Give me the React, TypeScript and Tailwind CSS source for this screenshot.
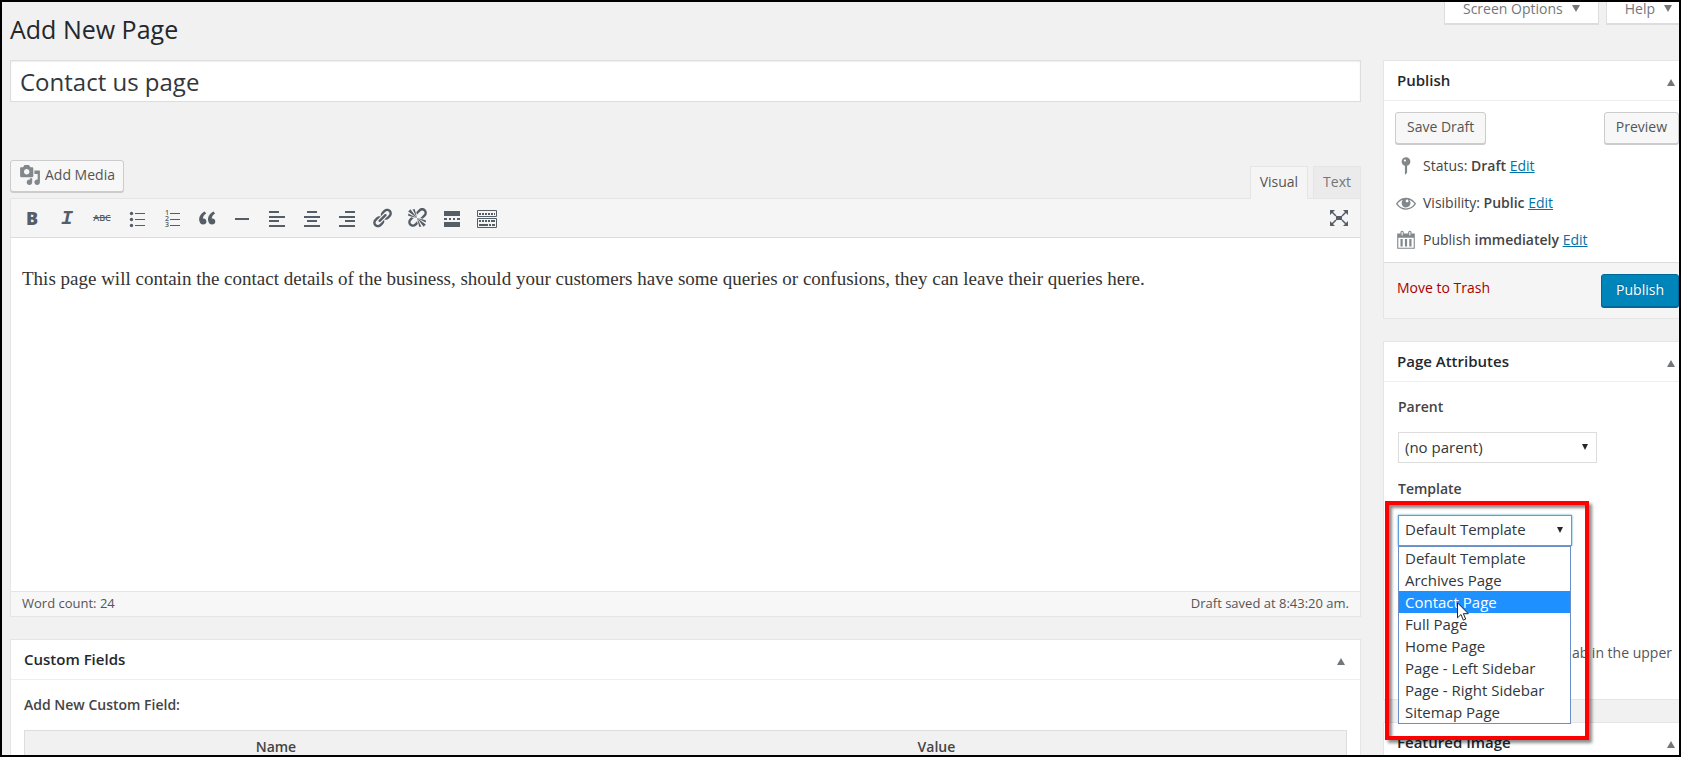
import type { ReactNode } from "react";

const templates = [
  "Default Template",
  "Archives Page",
  "Contact Page",
  "Full Page",
  "Home Page",
  "Page - Left Sidebar",
  "Page - Right Sidebar",
  "Sitemap Page",
];

const iconPaths = {
  quote:
    "M9.49 13.22c0-.74-.2-1.38-.61-1.9-.62-.78-1.83-.88-2.53-.72-.29-1.65 1.11-3.75 2.92-4.65L7.88 4c-2.73 1.3-5.42 4.28-4.96 8.05C3.21 14.43 4.59 16 6.54 16c.85 0 1.56-.25 2.12-.75s.83-1.18.83-2.03zm8.05 0c0-.74-.2-1.38-.61-1.9-.63-.78-1.83-.88-2.53-.72-.29-1.65 1.11-3.75 2.92-4.65L15.93 4c-2.73 1.3-5.41 4.28-4.95 8.05.29 2.38 1.66 3.95 3.61 3.95.85 0 1.56-.25 2.12-.75s.83-1.18.83-2.03z",
  link: "M17.74 2.76c1.68 1.69 1.68 4.41 0 6.1l-1.53 1.52c-1.12 1.12-2.7 1.47-4.14 1.09l2.62-2.61.76-.77.76-.76c.84-.84.84-2.2 0-3.04-.84-.85-2.2-.85-3.04 0l-.77.76-3.38 3.38c-.37-1.44-.02-3.02 1.1-4.14l1.52-1.53c1.69-1.68 4.42-1.68 6.1 0zM8.59 13.43l5.34-5.34c.42-.42.42-1.1 0-1.52-.44-.43-1.13-.39-1.53 0l-5.33 5.34c-.42.42-.42 1.1 0 1.52.44.43 1.13.39 1.52 0zm-.76 2.29l4.14-4.15c.38 1.44.03 3.02-1.09 4.14l-1.52 1.53c-1.69 1.68-4.41 1.68-6.1 0-1.68-1.68-1.68-4.42 0-6.1l1.53-1.52c1.12-1.12 2.7-1.47 4.14-1.1l-4.14 4.15c-.85.84-.85 2.2 0 3.05.84.84 2.2.84 3.04 0z",
  unlink:
    "M17.74 2.26c1.68 1.69 1.68 4.41 0 6.1l-1.53 1.52c-.32.33-.69.58-1.08.77L13 10l1.69-1.64.76-.77.76-.76c.84-.84.84-2.2 0-3.04-.84-.85-2.2-.85-3.04 0l-.77.76-.76.76L10 7l-.65-2.14c.19-.38.44-.75.77-1.07l1.52-1.53c1.69-1.68 4.42-1.68 6.1 0zM2 4l8 6-6-8zM6 2l4 8-2-8zM2 6l8 4-8-2zM9.36 13.69L10 13l.74 2.35-1.38 1.39c-1.69 1.68-4.41 1.68-6.1 0-1.68-1.68-1.68-4.42 0-6.1l1.39-1.38L7 10l-.69.64-1.52 1.53c-.85.84-.85 2.2 0 3.04.84.85 2.2.85 3.04 0zM18 16l-8-6 6 8zM14 18l-4-8 2 8zM18 14l-8-4 8 2z",
  media:
    "M13 11V4c0-.55-.45-1-1-1h-1.67L9 1H5L3.67 3H2c-.55 0-1 .45-1 1v7c0 .55.45 1 1 1h10c.55 0 1-.45 1-1zM7 4.5c1.38 0 2.5 1.12 2.5 2.5S8.38 9.5 7 9.5 4.5 8.38 4.5 7 5.62 4.5 7 4.5zM14 6h5v10.5c0 1.38-1.12 2.5-2.5 2.5S14 17.88 14 16.5s1.12-2.5 2.5-2.5c.17 0 .34.02.5.05V9h-3V6zm-4 8.05V13h2v3.5c0 1.38-1.12 2.5-2.5 2.5S7 17.88 7 16.5 8.12 14 9.5 14c.17 0 .34.02.5.05z",
  status:
    "M14 6c0 1.86-1.28 3.41-3 3.86V16c0 1-2 2-2 2V9.86c-1.72-.45-3-2-3-3.86 0-2.21 1.79-4 4-4s4 1.79 4 4zM8 5c0 .55.45 1 1 1s1-.45 1-1-.45-1-1-1-1 .45-1 1z",
  visibility:
    "M18.3 9.5C15 4.9 8.5 3.8 3.9 7.2c-1.2.9-2.2 2.1-3 3.4.2.4.5.8.8 1.2 3.3 4.6 9.6 5.6 14.2 2.4.9-.7 1.7-1.4 2.4-2.4.3-.4.5-.8.8-1.2-.3-.4-.5-.8-.8-1.1zm-8.2-2.3c.5-.5 1.3-.5 1.8 0s.5 1.3 0 1.8-1.3.5-1.8 0-.5-1.3 0-1.8zm-.1 7.7c-3.1 0-6-1.6-7.7-4.2C3.5 9 5.1 7.8 7 7.2c-.7.8-1 1.7-1 2.7 0 2.2 1.7 4.1 4 4.1 2.2 0 4.1-1.7 4.1-4v-.1c0-1-.4-2-1.1-2.7 1.9.6 3.5 1.8 4.7 3.5-1.7 2.6-4.6 4.2-7.7 4.2z",
  calendar:
    "M15 4h3v14H2V4h3V3c0-.83.67-1.5 1.5-1.5S8 2.17 8 3v1h4V3c0-.83.67-1.5 1.5-1.5S15 2.17 15 3v1zM6 3v2.5c0 .28.22.5.5.5s.5-.22.5-.5V3c0-.28-.22-.5-.5-.5S6 2.72 6 3zm7 0v2.5c0 .28.22.5.5.5s.5-.22.5-.5V3c0-.28-.22-.5-.5-.5s-.5.22-.5.5zm4 14V8H3v9h14zM7 16V9H5v7h2zm4 0V9H9v7h2zm4 0V9h-2v7h2z",
};

function Dashicon({ name }: { name: keyof typeof iconPaths }) {
  return (
    <svg viewBox="0 0 20 20" className="size-[22px] shrink-0 fill-current">
      <path d={iconPaths[name]} />
    </svg>
  );
}

// Line art on the 22px toolbar grid
function Glyph({ children }: { children: ReactNode }) {
  return (
    <svg viewBox="0 0 22 22" className="size-[22px] shrink-0 fill-current">
      {children}
    </svg>
  );
}

function AlignIcon({ shortX }: { shortX: number }) {
  return (
    <Glyph>
      <rect x={shortX} y="4" width="10" height="2" />
      <rect x="3" y="9" width="16" height="2" />
      <rect x={shortX} y="13" width="10" height="2" />
      <rect x="3" y="18" width="16" height="2" />
    </Glyph>
  );
}

function Caret({ up }: { up?: boolean }) {
  return (
    <svg
      viewBox="0 0 8 7"
      className={up ? "h-[7px] w-2 fill-[#72777c]" : "h-[7px] w-2 rotate-180 fill-[#72777c]"}
    >
      <path d="M4 0l4 7H0z" />
    </svg>
  );
}

const toolbar: { label: string; icon: ReactNode }[] = [
  {
    label: "Bold",
    icon: <span className="text-lg leading-[22px] font-extrabold">B</span>,
  },
  {
    label: "Italic",
    icon: (
      <span className="font-['Liberation_Mono'] text-xl leading-6 font-bold italic">
        I
      </span>
    ),
  },
  {
    label: "Strikethrough",
    icon: (
      <span className="text-[9px] leading-[22px] font-semibold line-through">ABC</span>
    ),
  },
  {
    label: "Bulleted list",
    icon: (
      <Glyph>
        <circle cx="5.5" cy="6.5" r="1.7" />
        <circle cx="5.5" cy="12.5" r="1.7" />
        <circle cx="5.5" cy="18.5" r="1.7" />
        <rect x="9" y="6" width="10" height="1" />
        <rect x="9" y="12" width="10" height="1" />
        <rect x="9" y="18" width="10" height="1" />
      </Glyph>
    ),
  },
  {
    label: "Numbered list",
    icon: (
      <Glyph>
        <g fontSize="7" fontWeight="600">
          <text x="4" y="8">1</text>
          <text x="4" y="14">2</text>
          <text x="4" y="20">3</text>
        </g>
        <rect x="9" y="6" width="10" height="1" />
        <rect x="9" y="12" width="10" height="1" />
        <rect x="9" y="18" width="10" height="1" />
      </Glyph>
    ),
  },
  { label: "Blockquote", icon: <Dashicon name="quote" /> },
  {
    label: "Horizontal line",
    icon: (
      <Glyph>
        <rect x="4" y="11" width="14" height="2" />
      </Glyph>
    ),
  },
  { label: "Align left", icon: <AlignIcon shortX={3} /> },
  { label: "Align center", icon: <AlignIcon shortX={6} /> },
  { label: "Align right", icon: <AlignIcon shortX={9} /> },
  { label: "Insert link", icon: <Dashicon name="link" /> },
  { label: "Remove link", icon: <Dashicon name="unlink" /> },
  {
    label: "Read more tag",
    icon: (
      <Glyph>
        <path d="M3 4h16v5H3zM3 15h16v5H3zM3 11h3v2H3zM8 11h2v2H8zM12 11h2v2h-2zM16 11h3v2h-3z" />
      </Glyph>
    ),
  },
  {
    label: "Toolbar toggle",
    icon: (
      <Glyph>
        <path
          d="M1.5 3.5h19v6h-19zM1.5 11.5h19v9h-19z"
          fill="none"
          stroke="currentColor"
        />
        <path d="M3 6h2v2H3zM6 6h2v2H6zM9 6h2v2H9zM12 6h2v2h-2zM15 6h2v2h-2zM18 6h1v2h-1zM3 13h2v2H3zM6 13h2v2H6zM9 13h2v2H9zM12 13h2v2h-2zM15 13h4v2h-4zM3 17h9v2H3zM13 17h2v2h-2zM16 17h3v2h-3z" />
      </Glyph>
    ),
  },
];

function BoxHeader({ title, wide }: { title: string; wide?: boolean }) {
  return (
    <div
      className={`flex h-10 items-center justify-between border-b border-[#eee] pl-[13px] ${
        wide ? "pr-[15px]" : "pr-1"
      }`}
    >
      <h2 className="pb-[2px] text-[15px] leading-5 font-semibold text-[#23282d]">
        {title}
      </h2>
      <button type="button" aria-label={`Toggle ${title}`} className="pt-[3px]">
        <Caret up />
      </button>
    </div>
  );
}

const boxClass = "border border-r-0 border-[#e5e5e5] bg-white";
const buttonClass =
  "h-8 rounded-[3px] border border-[#ccc] bg-[#f7f7f7] pb-[2px] text-sm text-[#555] shadow-[0_1px_0_#ccc]";

function PublishRow({
  icon,
  label,
  value,
}: {
  icon: keyof typeof iconPaths;
  label: string;
  value: string;
}) {
  return (
    <div className="flex h-[37px] items-center gap-[6px] text-[#82878c]">
      <Dashicon name={icon} />
      <span className="text-sm text-[#444]">
        {label} <b className="font-semibold">{value}</b>{" "}
        <a href="#edit" className="text-[#0073aa] underline">
          Edit
        </a>
      </span>
    </div>
  );
}

function SelectArrow() {
  return (
    <svg
      viewBox="0 0 6 6"
      className="pointer-events-none absolute top-3 right-[9px] size-[6px] fill-[#23282d]"
    >
      <path d="M0 0h6L3 6z" />
    </svg>
  );
}

function PublishBox() {
  return (
    <section className={boxClass}>
      <BoxHeader title="Publish" />
      <div className="pt-[11px] pl-[11px]">
        <div className="flex justify-between">
          <button type="button" className={`${buttonClass} px-[11px]`}>
            Save Draft
          </button>
          <button type="button" className={`${buttonClass} px-[11px]`}>
            Preview
          </button>
        </div>
        <div className="pt-[3px] pb-1">
          <PublishRow icon="status" label="Status:" value="Draft" />
          <PublishRow icon="visibility" label="Visibility:" value="Public" />
          <PublishRow icon="calendar" label="Publish" value="immediately" />
        </div>
      </div>
      <div className="flex items-start justify-between border-t border-[#ddd] bg-[#f5f5f5] py-[11px] pl-[13px]">
        <a href="#trash" className="pt-1 text-sm text-[#a00]">
          Move to Trash
        </a>
        <button
          type="button"
          className="h-[33px] rounded-[3px] border border-[#006799] bg-[#0085ba] px-[14px] pb-[2px] text-sm text-white shadow-[0_1px_0_#006799] text-shadow-[0_-1px_1px_#006799]"
        >
          Publish
        </button>
      </div>
    </section>
  );
}

function PageAttributes() {
  return (
    <section className={`${boxClass} h-[359px]`}>
      <BoxHeader title="Page Attributes" />
      <div className="pt-[15px] pl-[14px] text-sm text-[#444]">
        <label htmlFor="parent" className="block leading-5 font-semibold">
          Parent
        </label>
        <div className="relative mt-[15px] w-[199px]">
          <select
            id="parent"
            className="h-[31px] w-full appearance-none border border-[#ddd] bg-white pl-[6px] text-[15px] text-[#32373c]"
          >
            <option>(no parent)</option>
          </select>
          <SelectArrow />
        </div>
        <label htmlFor="template" className="mt-4 block leading-5 font-semibold">
          Template
        </label>
        <div className="relative mt-4 w-[174px]">
          <select
            id="template"
            className="h-[31px] w-full appearance-none border border-[#5b9dd9] bg-white pb-px pl-[6px] text-[15px] text-[#32373c] shadow-[0_0_2px_rgba(30,140,190,0.8)]"
          >
            {templates.map((name) => (
              <option key={name}>{name}</option>
            ))}
          </select>
          <SelectArrow />

          {/* open drop-down */}
          <ul className="absolute top-[31px] left-0 z-10 w-[173px] border border-[#6a8fc8] bg-white text-[15px] leading-[22px] text-[#32373c]">
            {templates.map((name) => (
              <li
                key={name}
                className={
                  name === "Contact Page"
                    ? "bg-[#1e90ff] pl-[6px] text-white"
                    : "pl-[6px]"
                }
              >
                {name}
              </li>
            ))}
          </ul>

          {/* highlight frame and pointer */}
          <div className="pointer-events-none absolute -top-[14px] -left-[13px] z-20 h-[239px] w-[204px] border-4 border-[#f00] shadow-[3px_3px_3px_rgba(0,0,0,0.45),inset_3px_3px_3px_rgba(0,0,0,0.45)]" />
          <svg
            viewBox="0 0 12 19"
            className="absolute top-[87px] left-[59px] z-30 h-[19px] w-3"
          >
            <path
              d="M.5.8v15l3.5-3.3 2.3 5.6 2.4-1-2.3-5.4h4.9z"
              fill="#fff"
              stroke="#222"
            />
          </svg>
        </div>
        <p className="mt-[97px] pr-[7px] text-right leading-5 text-[#555]">
          ab in the upper
        </p>
      </div>
    </section>
  );
}

function Editor() {
  return (
    <section className="mt-[58px]">
      <div className="flex items-end justify-between">
        <button
          type="button"
          className={`${buttonClass} mb-[6px] flex items-center gap-1 px-2`}
        >
          <span className="text-[#82878c]">
            <Dashicon name="media" />
          </span>
          Add Media
        </button>
        <div className="flex gap-[5px] text-sm text-[#72777c]">
          <button
            type="button"
            className="z-10 -mb-px h-[33px] border border-b-0 border-[#e5e5e5] bg-[#f5f5f5] px-[9px] pb-[3px] text-[#555]"
          >
            Visual
          </button>
          <button
            type="button"
            className="h-8 border border-b-0 border-[#e5e5e5] bg-[#ebebeb] px-[9px] pb-[2px]"
          >
            Text
          </button>
        </div>
      </div>
      <div className="border border-[#e5e5e5] bg-white">
        <div className="flex h-[39px] items-center justify-between border-b border-[#ddd] bg-[#f5f5f5] pr-[10px] pl-[5px] text-[#555d66]">
          <div className="flex gap-[3px]">
            {toolbar.map(({ label, icon }) => (
              <button
                key={label}
                type="button"
                aria-label={label}
                className="flex h-[22px] w-8 justify-center"
              >
                {icon}
              </button>
            ))}
          </div>
          <button type="button" aria-label="Distraction-free writing">
            <Glyph>
              <path d="M2 3h5L2 8zM20 3h-5l5 5zM2 19h5l-5-5zM20 19h-5l5-5zM8 9h6v4H8z" />
              <path
                d="M4 5l4 4M18 5l-4 4M4 17l4-4M18 17l-4-4"
                stroke="currentColor"
                strokeWidth="1.5"
              />
            </Glyph>
          </button>
        </div>
        <div className="h-[353px] px-[11px] pt-[27px] font-['Liberation_Serif',serif] text-[19px] leading-7 text-[#333]">
          <p>
            This page will contain the contact details of the business, should
            your customers have some queries or confusions, they can leave their
            queries here.
          </p>
        </div>
        <div className="flex h-[25px] items-center justify-between border-t border-[#e5e5e5] bg-[#f7f7f7] px-[11px] text-[13px] text-[#555]">
          <span>Word count: 24</span>
          <span>Draft saved at 8:43:20 am.</span>
        </div>
      </div>
    </section>
  );
}

function CustomFields() {
  return (
    <section className="mt-[22px] border border-[#e5e5e5] bg-white">
      <BoxHeader title="Custom Fields" wide />
      <div className="px-[13px] pt-[15px] text-sm text-[#444]">
        <p className="leading-5 font-semibold">Add New Custom Field:</p>
        <table className="mt-[15px] w-full border border-[#ddd] bg-[#f1f1f1]">
          <thead>
            <tr>
              <th className="w-[38%] py-[6px] leading-5 font-semibold">Name</th>
              <th className="py-[6px] leading-5 font-semibold">Value</th>
            </tr>
          </thead>
        </table>
      </div>
    </section>
  );
}

export default function App() {
  return (
    <div className="h-screen overflow-hidden border-2 border-black bg-[#f1f1f1] font-['Open_Sans',sans-serif]">
      <header className="flex h-[58px] items-start justify-between pl-2">
        <h1 className="pt-[9px] text-[25px] leading-9 text-[#23282d]">Add New Page</h1>
        <div className="-mt-2 flex gap-[7px] text-sm leading-5 text-[#72777c]">
          <button
            type="button"
            className="flex h-[30px] items-center gap-[9px] border border-t-0 border-[#ddd] bg-white px-[18px] shadow-[0_1px_0_#ddd]"
          >
            Screen Options
            <Caret />
          </button>
          <button
            type="button"
            className="flex h-[30px] items-center gap-[9px] border border-t-0 border-r-0 border-[#ddd] bg-white pr-[7px] pl-[18px] shadow-[0_1px_0_#ddd]"
          >
            Help
            <Caret />
          </button>
        </div>
      </header>
      <div className="flex gap-[22px] pl-2">
        <main className="min-w-0 flex-1">
          <input
            type="text"
            aria-label="Page title"
            defaultValue="Contact us page"
            className="block h-[42px] w-full border border-[#ddd] bg-white px-[9px] text-2xl text-[#32373c] shadow-[inset_0_1px_2px_rgba(0,0,0,0.07)]"
          />
          <Editor />
          <CustomFields />
        </main>
        <aside className="flex w-[296px] shrink-0 flex-col gap-[22px]">
          <PublishBox />
          <PageAttributes />
          <section className={boxClass}>
            <BoxHeader title="Featured Image" />
          </section>
        </aside>
      </div>
    </div>
  );
}
